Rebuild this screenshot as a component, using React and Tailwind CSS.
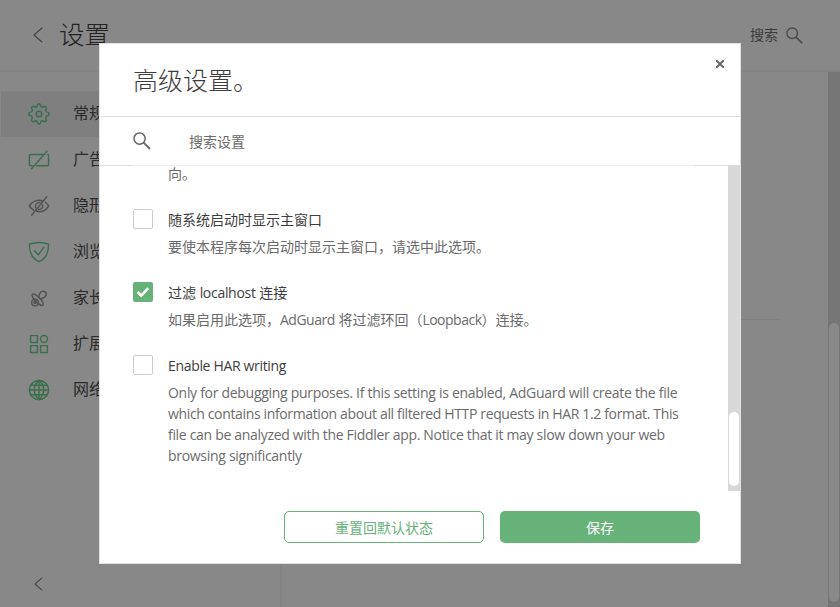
import React from "react";

const GREEN = "#3a6f4c";
const GREY = "#535353";

function Chevron({ className }) {
  return (
    <svg className={className} viewBox="0 0 10 16" fill="none" stroke="#444" strokeWidth="1.2">
      <path d="M9.2 .7 1 8l8.2 7.3" />
    </svg>
  );
}

function SearchIcon({ className }) {
  return (
    <svg className={className} viewBox="0 0 18 18" fill="none" stroke="currentColor" strokeWidth="1.5">
      <circle cx="6.6" cy="6.6" r="5.6" />
      <path d="M10.6 10.6 17 17" strokeWidth="1.9" />
    </svg>
  );
}

function Icon({ color, children }) {
  return (
    <svg
      className="h-[22px] w-[22px] shrink-0"
      viewBox="0 0 22 22"
      fill="none"
      stroke={color}
      strokeWidth="1.45"
      strokeLinecap="round"
      strokeLinejoin="round"
    >
      {children}
    </svg>
  );
}

const items = [
  {
    label: "常规设置",
    active: true,
    icon: (
      <Icon color={GREEN}>
        <circle cx="11" cy="11" r="2.8" />
        <path d="M9.2 3.3C9.5 1.600 9.700.8 11 .8s1.500.8 1.800 2.500c.1.500 1.600 1.100 2.100.8 1.400-1 2.200-1.300 3.100-.4s.6 1.700-.3 3.100c-.3.500.4 1.900.9 2.100 1.700.3 2.600.8 2.600 2.100s-.9 1.800-2.600 2.100c-.5.200-1.200 1.600-.9 2.100.9 1.400 1.200 2.200.3 3.100s-1.700.6-3.100-.4c-.5-.3-2 .3-2.100.8-.3 1.700-.5 2.500-1.800 2.500s-1.500-.8-1.800-2.500c-.1-.5-1.600-1.100-2.100-.8-1.400 1-2.200 1.300-3.100.4s-.6-1.700.3-3.100c.3-.5-.4-1.900-.9-2.100C1.700 12.800.8 12.300.8 11s.9-1.800 2.600-2.100c.5-.2 1.200-1.600.9-2.100C3.400 5.400 3.100 4.600 4 3.700s1.700-.6 3.100.4c.5.300 2-.3 2.100-.8z" />
      </Icon>
    ),
  },
  {
    label: "广告拦截器",
    icon: (
      <Icon color={GREEN}>
        <path d="M15 5.400H2.600a1.200 1.200 0 0 0-1.200 1.200v9a1.200 1.200 0 0 0 1.200 1.200h1.600M8.500 16.800h10.900a1.200 1.200 0 0 0 1.200-1.200v-9a1.200 1.200 0 0 0-1-1.200M3.500 19.700 19 2.200" />
      </Icon>
    ),
  },
  {
    label: "隐形模式",
    icon: (
      <Icon color={GREY}>
        <path d="M14.500 6C9 4 4 6.800 1.300 11c1.300 1.800 2.600 3.200 4.400 4.200M17.400 7.200c1.300 1 2.300 2.300 3.300 3.800-3 4.700-7.400 6.600-12 5.200M11.800 7.600A3.700 3.700 0 0 0 7.900 13M14.600 9.900a3.700 3.700 0 0 1-4.200 4.600M3.600 20.200 18.800 1.700" />
      </Icon>
    ),
  },
  {
    label: "浏览安全",
    icon: (
      <Icon color={GREEN}>
        <path d="M11 1.400c3.500 0 6.700.6 9.500 1.800.3 8.600-2.600 14.400-9.500 17.400C4.100 17.600 1.200 11.800 1.500 3.200 4.300 2 7.500 1.400 11 1.400z" />
        <path d="m6.600 9.800 3.700 4 5.400-7.500" />
      </Icon>
    ),
  },
  {
    label: "家长控制",
    icon: (
      <Icon color={GREY}>
        <ellipse cx="9.700" cy="12.700" rx="7.600" ry="2.500" transform="rotate(45 9.700 12.700)" />
        <circle cx="7" cy="15.400" r="3.300" />
        <circle cx="7" cy="15.400" r="1" />
        <path d="M11.200 10.300C10.600 6.500 12.700 4.200 15.200 4.200c2.300 0 3.600 2.100 2.800 4.200-.8 1.900-3 3.100-5.500 3.300" />
      </Icon>
    ),
  },
  {
    label: "扩展",
    icon: (
      <Icon color={GREEN}>
        <path d="M2.600 2.600h6.800v6.800H2.600zM2.600 12.600h6.800v6.800H2.600zM12.600 12.600h6.800v6.800h-6.800z" strokeLinejoin="miter" />
        <circle cx="16" cy="6" r="3.500" />
      </Icon>
    ),
  },
  {
    label: "网络",
    icon: (
      <Icon color={GREEN}>
        <circle cx="11" cy="11" r="9.600" />
        <path d="M1.500 11h19M3 6.300h16M3 15.700h16M11 1.400v19.200" />
        <path d="M11 1.400c-6.200 5.400-6.200 13.800 0 19.200M11 1.400c6.200 5.400 6.200 13.800 0 19.200" />
      </Icon>
    ),
  },
];

function Checkbox({ checked }) {
  return checked ? (
    <span className="flex h-5 w-5 shrink-0 items-center justify-center rounded-[2px] bg-[#67b279]">
      <svg className="h-5 w-5" viewBox="0 0 20 20" fill="none" stroke="#fff" strokeWidth="2.500">
        <path d="m4.600 10 3.600 3.600 7-7.400" />
      </svg>
    </span>
  ) : (
    <span className="h-5 w-5 shrink-0 rounded-[2px] border border-[#cdcdcd] bg-white" />
  );
}

function Option({ checked, title, children }) {
  return (
    <div className="flex gap-[15px]">
      <Checkbox checked={checked} />
      <div className="whitespace-nowrap">
        <div className="h-[21px] leading-[21px] text-[#3d3d3d]">{title}</div>
        <div className="mt-1.5 leading-[21px] text-[#6b6b6b]">{children}</div>
      </div>
    </div>
  );
}

export default function App() {
  return (
    <div className="relative flex h-[607px] w-[840px] flex-col overflow-hidden bg-[#888] font-['Open_Sans','Noto_Sans_CJK_SC',sans-serif] text-sm text-[#2b2b2b]">
      <header className="flex h-[72px] shrink-0 items-center border-b-2 border-[#848484] pl-[33px] pr-[37px]">
        <Chevron className="h-4 w-[10px]" />
        <h1 className="ml-4 text-[25.5px] font-light leading-none text-[#222]">设置</h1>
        <span className="ml-auto text-[#3d3d3d]">搜索</span>
        <SearchIcon className="ml-2 mt-px h-[17px] w-[17px] text-[#4d4d4d]" />
      </header>
      <div className="flex min-h-0 flex-1">
        <aside className="flex w-[282px] flex-col border-r-2 border-[#848484] pl-px pt-[19px]">
          {items.map((item) => (
            <div
              key={item.label}
              className={
                item.active
                  ? "flex h-[46px] items-center gap-[23px] bg-[#7f7f7f] pl-[27px] text-base"
                  : "flex h-[46px] items-center gap-[23px] pl-[27px] text-base"
              }
            >
              {item.icon}
              <span className="-mt-0.5">{item.label}</span>
            </div>
          ))}
          <Chevron className="mb-4 ml-[33px] mt-auto h-[14px] w-[9px]" />
        </aside>
        <main className="flex-1 pr-[49px] pt-[247px]">
          <div className="h-px bg-[#808080]" />
        </main>
        <div className="w-3 bg-[#767676] px-px pt-[251px]">
          <div className="h-[279px] rounded-full bg-[#898989]" />
        </div>
      </div>

      <section className="absolute left-[99px] top-[43px] flex h-[521px] w-[642px] flex-col border border-[#e2e2e2] bg-white">
        <div className="flex h-[73px] shrink-0 justify-between border-b border-[#e0e0e0] pl-[33px] pr-4">
          <h2 className="mt-[18px] text-[25px] font-light leading-[37px] text-[#3d3d3d]">高级设置。</h2>
          <svg className="mt-4 h-2 w-2 self-start" viewBox="0 0 8 8" stroke="#666" strokeWidth="2">
            <path d="m.3.3 7.400 7.400M7.700.3.3 7.700" />
          </svg>
        </div>
        <div className="flex h-12 shrink-0 items-center pl-[33px] text-[#6b6b6b]">
          <SearchIcon className="mb-px h-[18px] w-[18px] text-[#666]" />
          <span className="ml-[38px] mt-0.5">搜索设置</span>
        </div>
        <div className="flex h-px shrink-0 bg-[#ddd] pl-[33px] pr-[46px]">
          <div className="flex-1 bg-[#efefef]" />
        </div>
        <div className="flex h-[325px] shrink-0">
          <div className="flex flex-1 flex-col pl-[33px]">
            <div className="mb-7 h-[15px] pl-[35px] leading-[15px] text-[#6b6b6b]">向。</div>
            <div className="flex flex-col gap-[25px]">
              <Option title="随系统启动时显示主窗口">要使本程序每次启动时显示主窗口，请选中此选项。</Option>
              <Option
                checked
                title={<>过滤 <span className="tracking-[-0.3px]">localhost</span> 连接</>}
              >
                如果启用此选项，<span className="tracking-[-0.5px]">AdGuard</span> 将过滤环回（<span className="tracking-[-0.5px]">Loopback</span>）连接。
              </Option>
              <Option title={<span className="tracking-[-0.33px]">Enable HAR writing</span>}>
                <div className="tracking-[-0.295px]">Only for debugging purposes. If this setting is enabled, AdGuard will create the file</div>
                <div className="tracking-[-0.355px]">which contains information about all filtered HTTP requests in HAR 1.2 format. This</div>
                <div className="tracking-[-0.315px]">file can be analyzed with the Fiddler app. Notice that it may slow down your web</div>
                <div className="tracking-[-0.3px]">browsing significantly</div>
              </Option>
            </div>
          </div>
          <div className="w-3 bg-[#d8d8d8] px-px pt-[246px]">
            <div className="h-[74px] rounded-full bg-white" />
          </div>
        </div>
        <div className="flex justify-end gap-4 pr-10 pt-5">
          <button className="h-8 w-[200px] rounded-[5px] border border-[#67b279] pt-px text-[#67b279]">重置回默认状态</button>
          <button className="h-8 w-[200px] rounded-[5px] bg-[#67b279] pt-px text-white">保存</button>
        </div>
      </section>
    </div>
  );
}
